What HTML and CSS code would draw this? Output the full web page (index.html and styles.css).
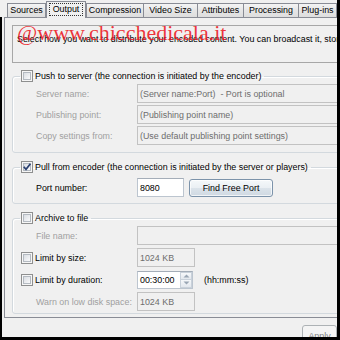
FILE: index.html
```html
<!DOCTYPE html>
<html>
<head>
<meta charset="utf-8">
<link rel="stylesheet" href="styles.css">
</head>
<body>
<div class="window">
  <div class="tabs">
    <div class="tab w-sources">Sources</div>
    <div class="tab tab-active w-output"><span class="focus">Output</span></div>
    <div class="tab w-compression">Compression</div>
    <div class="tab tab-join w-video">Video Size</div>
    <div class="tab tab-join w-attr">Attributes</div>
    <div class="tab tab-join w-proc">Processing</div>
    <div class="tab tab-join w-plug">Plug-ins</div>
  </div>
  <div class="main">
    <div class="panel">
      <div class="intro">Select how you want to distribute your encoded content. You can broadcast it, store it in a file, or both.</div>

      <fieldset class="group g-push">
        <legend><span class="cb"></span><span>Push to server (the connection is initiated by the encoder)</span></legend>
        <div class="rows gap2">
          <span class="lbl dis">Server name:</span>
          <span class="field dis wide">(Server name:Port)&nbsp; - Port is optional</span>
          <span class="lbl dis">Publishing point:</span>
          <span class="field dis wide">(Publishing point name)</span>
          <span class="lbl dis">Copy settings from:</span>
          <span class="field dis wide">(Use default publishing point settings)</span>
        </div>
      </fieldset>

      <fieldset class="group g-pull">
        <legend><span class="cb cb-on"><svg width="10" height="10" viewBox="0 0 10 10"><path d="M1.8 4.8 L4 7.4 L8.4 1.8" fill="none" stroke="#2a3f70" stroke-width="1.7"/></svg></span><span>Pull from encoder (the connection is initiated by the server or players)</span></legend>
        <div class="rows">
          <span class="lbl">Port number:</span>
          <span class="cell">
            <span class="field en w-port">8080</span>
            <span class="btn">Find Free Port</span>
          </span>
        </div>
      </fieldset>

      <fieldset class="group g-archive">
        <legend><span class="cb"></span><span>Archive to file</span></legend>
        <div class="rows gap3">
          <span class="lbl dis">File name:</span>
          <span class="field dis wide"></span>
          <span class="lbl lbl-cb"><span class="cb"></span><span>Limit by size:</span></span>
          <span class="field dis w-kb">1024 KB</span>
          <span class="lbl lbl-cb"><span class="cb"></span><span>Limit by duration:</span></span>
          <span class="cell">
            <span class="field en spin">
              <span class="spin-val">00:30:00</span>
              <span class="spin-btns">
                <span class="sb"><svg width="7" height="4" viewBox="0 0 7 4"><path d="M0.5 3.5 L3.5 0.5 L6.5 3.5 Z" fill="#9aa6b4"/></svg></span>
                <span class="sb"><svg width="7" height="4" viewBox="0 0 7 4"><path d="M0.5 0.5 L3.5 3.5 L6.5 0.5 Z" fill="#9aa6b4"/></svg></span>
              </span>
            </span>
            <span class="hint">(hh:mm:ss)</span>
          </span>
          <span class="lbl dis">Warn on low disk space:</span>
          <span class="field dis w-kb">1024 KB</span>
        </div>
      </fieldset>
    </div>
    <div class="footer"><span class="btn btn-dis">Apply</span></div>
  </div>
  <div class="watermark">@www.chicchedicala.it</div>
</div>
</body>
</html>
```

FILE: styles.css
```css
* { box-sizing: border-box; }
html, body { margin: 0; padding: 0; background: #f0f0f0; }
body {
  font-family: "Liberation Sans", Arial, sans-serif;
  font-size: 8.9px;
  color: #000;
}
.window {
  position: relative;
  width: 340px;
  height: 340px;
  overflow: hidden;
  background: #f0f0f0;
  border-right: 3px solid #000;
  border-bottom: 3px solid #000;
  display: flex;
  flex-direction: column;
}

/* tabs */
.tabs {
  height: 17px;
  flex: none;
  display: flex;
  align-items: flex-end;
  padding-left: 7px;
}
.tab {
  height: 14px;
  border: 1px solid #898c95;
  border-bottom: 0;
  background: linear-gradient(#f4f4f4, #e6e6e6 50%, #dedede);
  display: flex;
  align-items: center;
  justify-content: center;
  white-space: nowrap;
  line-height: 11px;
  flex: none;
}
.tab-join { margin-left: -1px; }
.tab-active {
  height: 17px;
  margin-bottom: -1px;
  background: #f0f0f0;
  position: relative;
  z-index: 1;
  padding-bottom: 2px;
}
.focus {
  display: inline-block;
  border: 1px dotted #333;
  padding: 0 3px;
  height: 13px;
  line-height: 11px;
}
.w-sources { width: 39px; }
.w-output { width: 40px; }
.w-compression { width: 58px; }
.w-video { width: 55px; }
.w-attr { width: 47px; }
.w-proc { width: 56px; }
.w-plug { width: 39px; }

/* main area */
.main {
  flex: 1;
  border-left: 2px solid #000;
  min-height: 0;
}
.panel {
  margin-left: 2px;
  width: 440px;
  border: 1px solid #898c95;
  background: #f0f0f0;
  padding: 0 0 3px 0;
}
.intro {
  margin: 7px 0 0 7px;
  width: 420px;
  height: 38px;
  border: 1px solid #a7a7a7;
  padding: 8px 0 0 4px;
  line-height: 11px;
  white-space: nowrap;
  overflow: hidden;
}

/* group boxes */
.group {
  margin: 0 0 0 7px;
  width: 420px;
  min-width: 0;
  border: 1px solid #d3d9de;
  border-radius: 3px;
  box-shadow: inset 1px 1px 0 #fff;
}
.group legend {
  margin-left: 7px;
  padding: 0 3px 0 1px;
  height: 12px;
  display: flex;
  align-items: center;
  gap: 2px;
  line-height: 12px;
  white-space: nowrap;
}
.g-push { margin-top: 7px; padding: 2px 0 7px 0; }
.g-pull { margin-top: 8px; padding: 5px 0 6px 0; }
.g-archive { margin-top: 8px; padding: 2px 0 2px 0; }

.rows {
  display: grid;
  grid-template-columns: 124px auto;
  grid-auto-rows: 19px;
  align-items: center;
}
.gap2 { row-gap: 2px; }
.gap3 { row-gap: 3px; }
.lbl {
  padding-left: 23px;
  white-space: nowrap;
  line-height: 12px;
}
.lbl-cb {
  padding-left: 8px;
  display: flex;
  align-items: center;
  gap: 2px;
}
.dis { color: #a0a0a0; }
.cell {
  display: flex;
  align-items: center;
  height: 19px;
}

/* fields */
.field {
  display: flex;
  align-items: center;
  height: 19px;
  padding-left: 2px;
  white-space: nowrap;
  border: 1px solid #b9b9b9;
}
.field.dis {
  background: #f0f0f0;
  color: #6d6d6d;
  border-color: #c2c2c2;
}
.field.en {
  background: #fff;
  color: #000;
  border-color: #bcc5cf;
  border-top-color: #a4adb8;
}
.wide { width: 290px; }
.w-port { width: 47px; }
.w-kb { width: 58px; }
.spin {
  width: 56px;
  height: 18px;
  padding: 0 0 0 2px;
  justify-content: space-between;
  color: #333;
}
.spin-btns {
  display: flex;
  flex-direction: column;
  width: 12px;
  height: 16px;
}
.sb {
  flex: 1;
  display: flex;
  align-items: center;
  justify-content: center;
  background: linear-gradient(#f6f8fa, #e3e8ee);
  border: 1px solid #c9d1da;
}
.sb + .sb { border-top: 0; }
.hint { margin-left: 11px; white-space: nowrap; }

/* checkbox */
.cb {
  width: 12px;
  height: 12px;
  flex: none;
  border: 1px solid #8e8f8f;
  background: linear-gradient(135deg, #cfd4da, #f4f5f7 70%, #ffffff);
  box-shadow: inset 0 0 0 1px #f6f6f6, inset 0 0 0 2px #b4bac1;
  display: flex;
  align-items: center;
  justify-content: center;
}
.cb-on svg { display: block; }

/* buttons */
.btn {
  display: inline-flex;
  align-items: center;
  justify-content: center;
  width: 84px;
  height: 18px;
  margin-left: 5px;
  border: 1px solid #7c93aa;
  border-radius: 3px;
  background: linear-gradient(#f5f8fa, #eaeff3 50%, #dbe3ea 51%, #cfd9e2);
  box-shadow: inset 0 0 0 1px rgba(255,255,255,0.7);
  white-space: nowrap;
}
.footer {
  margin-top: 7px;
  padding-left: 300px;
  display: flex;
}
.btn-dis {
  margin-left: 0;
  width: 60px;
  height: 22px;
  border-color: #adb2b5;
  background: #f4f4f4;
  box-shadow: none;
  color: #838383;
}

.watermark {
  position: absolute;
  left: 17px;
  top: 22px;
  font-family: "Liberation Serif", "Times New Roman", serif;
  font-size: 22px;
  line-height: 22px;
  color: rgba(236, 24, 36, 0.88);
  white-space: nowrap;
  pointer-events: none;
}
```
